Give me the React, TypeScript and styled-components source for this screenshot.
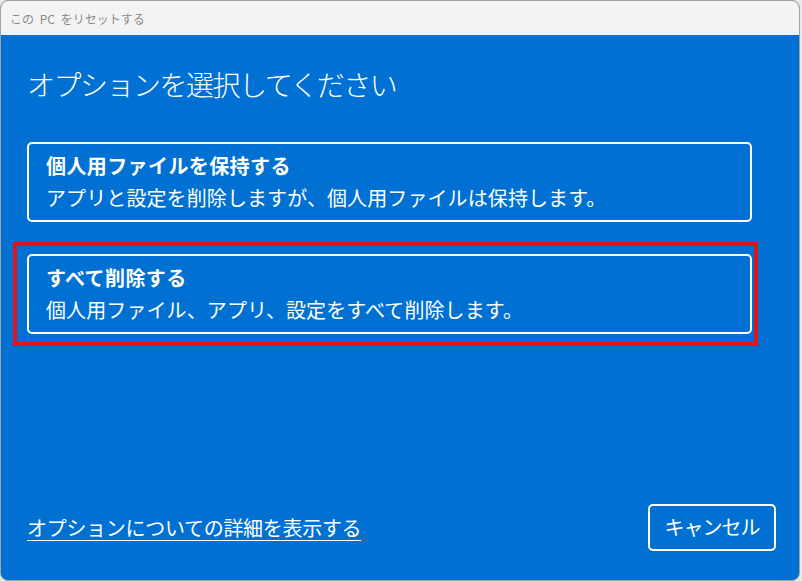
import { FC } from "react";
import styled, { createGlobalStyle } from 'styled-components';

const GlobalStyle = createGlobalStyle`
  html, body {
    margin: 0;
    padding: 0;
    background: #e9e9e9;
  }
  body {
    font-family: "Noto Sans CJK JP", "Noto Sans", sans-serif;
  }
`;

const Window = styled.div`
  width: 798px;
  height: 579px;
  display: flex;
  flex-direction: column;
  border: 1px solid #a3a3a3;
  border-radius: 8px;
  overflow: hidden;
  background: #0071d3;
`;

const TitleBar = styled.div`
  height: 34px;
  background: #f3f3f3;
  display: flex;
  align-items: center;
  padding-left: 9px;
  font-size: 12px;
  color: #8a8a8a;
  word-spacing: 3px;
  white-space: pre;
`;

const Body = styled.div`
  flex: 1;
  display: flex;
  flex-direction: column;
  padding: 27px 22px 29px 26px;
  color: #ffffff;
`;

const Heading = styled.h1`
  margin: 0;
  font-size: 28px;
  font-weight: 300;
  line-height: 44px;
  letter-spacing: -1.5px;
`;

const Options = styled.div`
  display: flex;
  flex-direction: column;
  gap: 32px;
  margin-top: 36px;
  width: 725px;
`;

const OptionCard = styled.div<{ $highlight?: boolean }>`
  position: relative;
  box-sizing: border-box;
  height: 80px;
  padding: 8px 17px;
  border: 2px solid #ffffff;
  border-radius: 5px;
  display: flex;
  flex-direction: column;
  justify-content: center;

  ${({ $highlight }) => $highlight && `
    &::after {
      content: '';
      position: absolute;
      top: -14px;
      left: -16px;
      right: -8px;
      bottom: -14px;
      border: 4px solid #e3131b;
    }
  `}
`;

const OptionTitle = styled.div`
  font-size: 20px;
  font-weight: 700;
  line-height: 32px;
  letter-spacing: 0.4px;
`;

const OptionDesc = styled.div`
  font-size: 20px;
  font-weight: 400;
  line-height: 32px;
  letter-spacing: 0.1px;
`;

const Footer = styled.div`
  margin-top: auto;
  display: flex;
  justify-content: space-between;
  align-items: center;
`;

const MoreLink = styled.a`
  color: #ffffff;
  font-size: 20px;
  text-decoration: underline;
  text-underline-offset: 4px;
  text-decoration-thickness: 1px;
  letter-spacing: -0.3px;
  cursor: pointer;
`;

const CancelButton = styled.button`
  width: 128px;
  height: 47px;
  margin-right: 1px;
  background: transparent;
  border: 2px solid #ffffff;
  border-radius: 5px;
  color: #ffffff;
  font-family: inherit;
  font-size: 20px;
  letter-spacing: -1px;
  padding: 0 0 2px;
`;

const options = [
  {
    title: '個人用ファイルを保持する',
    desc: 'アプリと設定を削除しますが、個人用ファイルは保持します。',
  },
  {
    title: 'すべて削除する',
    desc: '個人用ファイル、アプリ、設定をすべて削除します。',
    highlight: true,
  },
];

const App: FC = () => (
  <>
    <GlobalStyle />
    <Window>
      <TitleBar>この PC をリセットする</TitleBar>
      <Body>
        <Heading>オプションを選択してください</Heading>
        <Options>
          {options.map((o) => (
            <OptionCard key={o.title} $highlight={o.highlight}>
              <OptionTitle>{o.title}</OptionTitle>
              <OptionDesc>{o.desc}</OptionDesc>
            </OptionCard>
          ))}
        </Options>
        <Footer>
          <MoreLink>オプションについての詳細を表示する</MoreLink>
          <CancelButton>キャンセル</CancelButton>
        </Footer>
      </Body>
    </Window>
  </>
);

export default App;
